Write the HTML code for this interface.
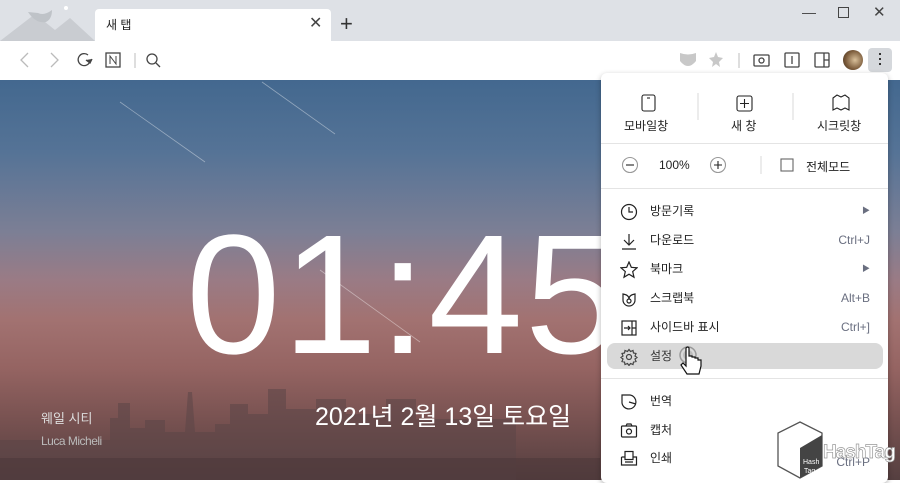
<!DOCTYPE html>
<html><head><meta charset="utf-8"><style>
*{margin:0;padding:0;box-sizing:border-box}
body{width:900px;height:480px;overflow:hidden;position:relative;font-family:"Liberation Sans","Noto Sans CJK KR",sans-serif;background:#fff}
.abs{position:absolute}
.top{left:0;top:0;width:900px;height:41px;background:#dee1e6}
.tab{left:95px;top:9px;width:236px;height:32px;background:#fff;border-radius:4px 4px 0 0}
.bar{left:0;top:41px;width:900px;height:39px;background:#fff}
.bg{left:0;top:80px;width:900px;height:400px;background:linear-gradient(180deg,#43688f 0%,#557396 18%,#7c7f95 38%,#9a7b85 50%,#a27271 60%,#956462 72%,#7a5352 84%,#553f40 100%)}
.menu{left:601px;top:73px;width:287px;height:410px;background:#fff;border-radius:6px;box-shadow:0 2px 6px rgba(0,0,0,.3);font-size:12px;color:#222}
.item{position:absolute;left:0;width:287px;height:26px;line-height:26px}
.item .t{position:absolute;left:49px}
.item .k{position:absolute;right:18px;color:#6a6f80;font-size:12px}
.item svg{position:absolute;left:19px;top:5px}
.hr{position:absolute;left:0;width:287px;height:1px;background:#e4e4e4}
</style></head><body>
<div class="abs top"></div>
<svg class="abs" style="left:0;top:0" width="95" height="41"><polygon points="0,41 35,14 55,30 70,18 95,41" fill="#c9ccd1"/><path d="M28 12 q8 12 18 10 q6-3 6-12 q-8 6-14 3 z" fill="#bfc3c8"/><circle cx="66" cy="8" r="2" fill="#fff"/></svg>
<div class="abs tab"></div>
<div class="abs" style="left:106px;top:16px;font-size:12px;color:#222">새 탭</div>
<div class="abs" style="left:309px;top:13px;font-size:16px;color:#444">✕</div>
<div class="abs" style="left:340px;top:11px;font-size:22px;color:#333;font-weight:300">+</div>
<div class="abs" style="left:802px;top:4px;font-size:14px;color:#444">—</div>
<div class="abs" style="left:838px;top:7px;width:11px;height:11px;border:1px solid #444"></div>
<div class="abs" style="left:873px;top:3px;font-size:15px;color:#444">✕</div>
<div class="abs bar"></div>
<svg class="abs" style="left:0;top:41px" width="900" height="39" fill="none" stroke="#444" stroke-width="1.3">
<path d="M28 12 l-7 7 7 7" stroke="#bbb"/><path d="M51 12 l7 7 -7 7" stroke="#bbb"/>
<path d="M88 14 a6 6 0 1 0 2 6" /><path d="M86 19 l4 3 2-4" fill="#444"/>
<rect x="106" y="12" width="14" height="14"/><path d="M110 23 v-8 l6 8 v-8" stroke-width="1"/>
<path d="M135 12 v15" stroke="#ccc"/>
<circle cx="152" cy="18" r="5"/><path d="M156 22 l4 4"/>
<path d="M680 12 q8 3 16 0 v8 q-8 10-16 0z" fill="#c8c8c8" stroke="none"/>
<path d="M716 11 l2 5 5 1 -4 4 1 5 -4-3 -4 3 1-5 -4-4 5-1z" fill="#c8c8c8" stroke="none"/>
<path d="M739 12 v15" stroke="#ccc"/>
<rect x="754" y="14" width="15" height="11" rx="1"/><circle cx="761.5" cy="19.5" r="2.5"/>
<rect x="785" y="12" width="14" height="14" rx="1"/><path d="M792 15 v8"/>
<rect x="815" y="12" width="14" height="14" rx="1"/><path d="M824 12 v14 M824 19 h5"/>
</svg>
<div class="abs" style="left:843px;top:50px;width:20px;height:20px;border-radius:50%;background:radial-gradient(circle at 60% 50%,#d9c09a,#7a5a3a 60%,#3a2a1a)"></div>
<div class="abs" style="left:868px;top:48px;width:24px;height:24px;background:#d5d8dc;border-radius:4px"></div>
<div class="abs" style="left:879px;top:53px;width:2px;height:2px;background:#333;box-shadow:0 5px #333,0 10px #333"></div>
<div class="abs bg"></div>
<svg class="abs" style="left:0;top:80px" width="600" height="400">
<path d="M120 22 L205 82 M262 2 L335 54 M320 190 L420 262" stroke="rgba(255,255,255,.4)" stroke-width="0.8"/>
<path d="M0 400 V360 h110 v-22 h8 v-15 h12 v25 h15 v-8 h20 v12 h20 l3-40 h4 l3 40 h20 v-8 h15 v-20 h18 v10 h20 v-25 h18 v20 h30 v-10 h30 v15 h40 v-15 h30 v20 h100 V400z" fill="#5b4547" opacity=".55"/>
<path d="M0 400 V378 h600 V400z" fill="#4a3638" opacity=".5"/>
</svg>
<div class="abs" style="left:186px;top:210px;font-size:170px;color:#fff;line-height:1;letter-spacing:2px">01:45</div>
<div class="abs" style="left:315px;top:397px;font-size:25px;color:#fff;letter-spacing:0px">2021년 2월 13일 토요일</div>
<div class="abs" style="left:41px;top:408px;font-size:13px;color:#ddd">웨일 시티</div>
<div class="abs" style="left:41px;top:434px;font-size:12px;color:#bbb;letter-spacing:-.5px">Luca Micheli</div>
<div class="abs menu">
<svg class="abs" style="left:0;top:0" width="287" height="410" fill="none" stroke="#222" stroke-width="1.1">
<rect x="41" y="22" width="13" height="16" rx="2"/><path d="M46 25 h3"/>
<path d="M97 20 v27 M192 20 v27" stroke="#ddd"/>
<rect x="136" y="23" width="15" height="15" rx="2"/><path d="M143.5 26 v9 M139 30.5 h9"/>
<path d="M232 25 l4-3 4 2 4-2 4 3 v12 l-4-2 -4 2 -4-2 -4 2z"/>
<circle cx="29" cy="92" r="7.5" stroke="#999"/><path d="M25 92 h8"/>
<circle cx="117" cy="92" r="7.5" stroke="#999"/><path d="M113 92 h8 M117 88 v8"/>
<path d="M160 83 v18" stroke="#ddd"/>
<rect x="180" y="86" width="12" height="12" stroke="#666"/>
</svg>
<div class="abs" style="left:23px;top:44px">모바일창</div>
<div class="abs" style="left:130px;top:44px">새 창</div>
<div class="abs" style="left:216px;top:44px">시크릿창</div>
<div class="abs" style="left:58px;top:85px">100%</div>
<div class="abs" style="left:205px;top:85px">전체모드</div>
<div class="hr" style="top:70px"></div>
<div class="hr" style="top:115px"></div>
<div class="item" style="top:125px"><svg width="18" height="18" fill="none" stroke="#222" stroke-width="1.2"><circle cx="9" cy="9" r="7.5"/><path d="M9 4 v5 h4"/></svg><span class="t">방문기록</span><span class="k" style="font-size:8px">▶</span></div>
<div class="item" style="top:154px"><svg width="18" height="18" fill="none" stroke="#222" stroke-width="1.2"><path d="M9 2 v11 M4 8 l5 5 5-5 M2 17 h14"/></svg><span class="t">다운로드</span><span class="k">Ctrl+J</span></div>
<div class="item" style="top:183px"><svg width="18" height="18" fill="none" stroke="#222" stroke-width="1.2"><path d="M9 1 l2.3 5.3 5.7.5 -4.3 3.8 1.3 5.6 -5-3 -5 3 1.3-5.6 -4.3-3.8 5.7-.5z"/></svg><span class="t">북마크</span><span class="k" style="font-size:8px">▶</span></div>
<div class="item" style="top:212px"><svg width="18" height="18" fill="none" stroke="#222" stroke-width="1.2"><path d="M3 4 q6 1 6 5 q0-4 6-5 v6 a6 6 0 0 1-12 0z"/><circle cx="9" cy="11" r="2"/></svg><span class="t">스크랩북</span><span class="k">Alt+B</span></div>
<div class="item" style="top:241px"><svg width="18" height="18" fill="none" stroke="#222" stroke-width="1.2"><rect x="2" y="2" width="14" height="14"/><path d="M12 2 v14 M12 9 h4 M4 9 h6 M8 7 l2 2 -2 2"/></svg><span class="t">사이드바 표시</span><span class="k">Ctrl+]</span></div>
<div class="abs" style="left:6px;top:270px;width:276px;height:26px;background:#d9d9d9;border-radius:8px"></div>
<div class="item" style="top:270px"><svg width="18" height="18" fill="none" stroke="#444" stroke-width="1.2"><circle cx="9" cy="9" r="2.5"/><path d="M9 1.5 l1.5 2 2.5-1 .5 2.5 2.5.5 -1 2.5 2 1.5 -2 1.5 1 2.5 -2.5.5 -.5 2.5 -2.5-1 -1.5 2 -1.5-2 -2.5 1 -.5-2.5 -2.5-.5 1-2.5 -2-1.5 2-1.5 -1-2.5 2.5-.5 .5-2.5 2.5 1z"/></svg><span class="t" style="color:#333">설정</span></div>
<svg class="abs" style="left:78px;top:272px" width="30" height="40"><circle cx="9" cy="10" r="8" fill="none" stroke="#999" stroke-width="1.5"/><circle cx="9" cy="10" r="5" fill="#bbb"/><path d="M7 8 v13 l-3-3 -2 2 6 9 h12 l2-8 v-6 h-3 v-2 h-3 v-1 h-3 v-1 h-3 v-8 q-1-2-3 0z" fill="#fff" stroke="#111" stroke-width="1.2"/></svg>
<div class="hr" style="top:305px"></div>
<div class="item" style="top:315px"><svg width="18" height="18" fill="none" stroke="#222" stroke-width="1.2"><path d="M2 2 h8 a7 7 0 1 1 -8 8z M9 9 l7 2"/></svg><span class="t">번역</span></div>
<div class="item" style="top:344px"><svg width="18" height="18" fill="none" stroke="#222" stroke-width="1.2"><rect x="1.5" y="4" width="15" height="11" rx="1"/><path d="M6 4 l1-2 h4 l1 2"/><circle cx="9" cy="9.5" r="2.5"/></svg><span class="t">캡처</span></div>
<div class="item" style="top:372px"><svg width="18" height="18" fill="none" stroke="#222" stroke-width="1.2"><rect x="5" y="1.5" width="8" height="8"/><path d="M1.5 7 h3 M13 7 h3.5 v8 h-15 v-8 M5 12 h8"/></svg><span class="t">인쇄</span><span class="k" style="top:4px">Ctrl+P</span></div>
</div>
<svg class="abs" style="left:774px;top:420px" width="126" height="60"><polygon points="26,2 48,13 48,46 26,58 4,46 4,13" fill="#fff" stroke="#555" stroke-width="1.3"/><polygon points="26,28 48,15 48,46 26,58" fill="#444"/><text x="29" y="44" font-size="7" fill="#fff" font-family="Liberation Sans">Hash</text><text x="30" y="53" font-size="7" fill="#fff" font-family="Liberation Sans">Tag</text><text x="49" y="38" font-size="19" font-weight="bold" fill="#fff" stroke="#999" stroke-width=".7" font-family="Liberation Sans" letter-spacing="-1">HashTag</text></svg>
</body></html>
